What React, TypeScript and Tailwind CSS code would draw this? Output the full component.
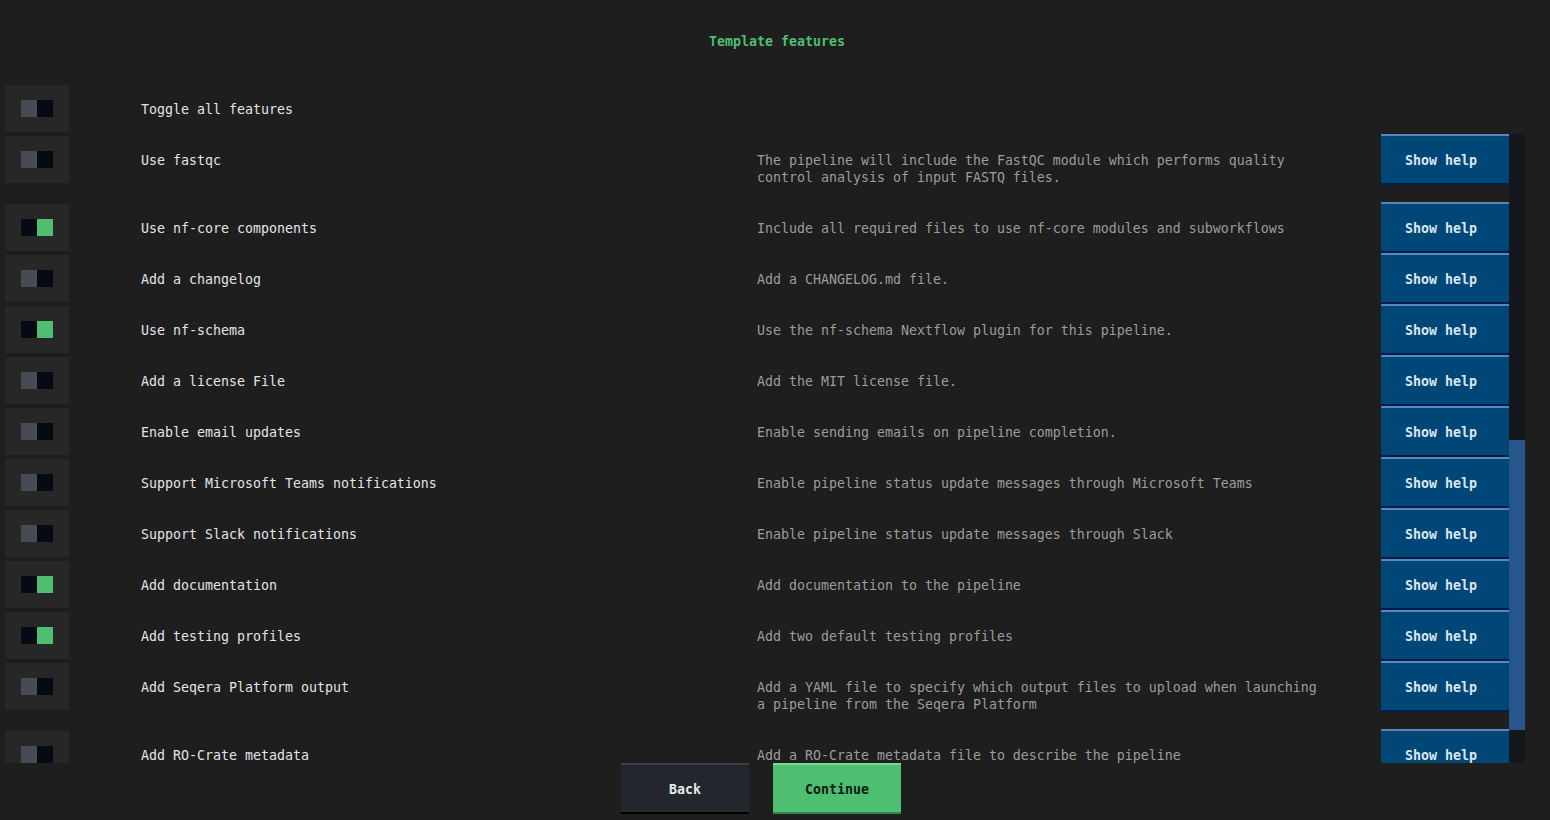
import React from "react";

type Feature = { name: string; desc: string; on: boolean; two?: boolean };

const features: Feature[] = [
  { name: "Use fastqc", desc: "The pipeline will include the FastQC module which performs quality control analysis of input FASTQ files.", on: false, two: true },
  { name: "Use nf-core components", desc: "Include all required files to use nf-core modules and subworkflows", on: true },
  { name: "Add a changelog", desc: "Add a CHANGELOG.md file.", on: false },
  { name: "Use nf-schema", desc: "Use the nf-schema Nextflow plugin for this pipeline.", on: true },
  { name: "Add a license File", desc: "Add the MIT license file.", on: false },
  { name: "Enable email updates", desc: "Enable sending emails on pipeline completion.", on: false },
  { name: "Support Microsoft Teams notifications", desc: "Enable pipeline status update messages through Microsoft Teams", on: false },
  { name: "Support Slack notifications", desc: "Enable pipeline status update messages through Slack", on: false },
  { name: "Add documentation", desc: "Add documentation to the pipeline", on: true },
  { name: "Add testing profiles", desc: "Add two default testing profiles", on: true },
  { name: "Add Seqera Platform output", desc: "Add a YAML file to specify which output files to upload when launching a pipeline from the Seqera Platform", on: false, two: true },
  { name: "Add RO-Crate metadata", desc: "Add a RO-Crate metadata file to describe the pipeline", on: false },
];

function Toggle({ on }: { on: boolean }) {
  return (
    <div className="w-[136px] shrink-0 pt-[2px]">
      <div className="w-[64px] h-[47px] bg-[#272727] flex items-center pl-[16px]">
        {on ? (
          <div className="flex">
            <div className="w-[16px] h-[17px] bg-[#050a14]" />
            <div className="w-[16px] h-[17px] bg-[#4ebf71]" />
          </div>
        ) : (
          <div className="flex">
            <div className="w-[16px] h-[17px] bg-[#474b53]" />
            <div className="w-[16px] h-[17px] bg-[#050a14]" />
          </div>
        )}
      </div>
    </div>
  );
}

function HelpButton() {
  return (
    <div className="w-[128px] h-[51px] shrink-0 bg-[#004677] border-t-2 border-b-2 border-t-[#5a86bb] border-b-[#001c48] flex items-center justify-center pr-[8px] pt-[2px] font-bold text-[#dbe6f0]">
      Show help
    </div>
  );
}

function Row({ f }: { f: Feature }) {
  return (
    <div className={f.two ? "flex h-[68px] shrink-0" : "flex h-[51px] shrink-0"}>
      <Toggle on={f.on} />
      <div className="w-[616px] shrink-0 pt-[18px] text-[#e2e4e8]">{f.name}</div>
      <div className="w-[624px] shrink-0 pt-[18px] text-[#9c9c9c]">
        <div className="w-[572px]">{f.desc}</div>
      </div>
      <HelpButton />
    </div>
  );
}

export default function App() {
  return (
    <div className="w-[1550px] h-[820px] overflow-hidden bg-[#1e1e1e] pl-[5px] flex flex-col font-[family-name:DejaVu_Sans_Mono,monospace] text-[13.29px] leading-[17px]">
      <div className="mt-[33px] h-[17px] w-[1544px] text-center font-bold text-[#4ebf71]">Template features</div>
      <div className="mt-[33px] flex h-[51px] shrink-0">
        <Toggle on={false} />
        <div className="pt-[18px] text-[#e2e4e8]">Toggle all features</div>
      </div>
      <div className="flex h-[629px] shrink-0">
        <div className="w-[1504px] h-[629px] overflow-hidden flex flex-col">
          {features.map((f) => (
            <Row key={f.name} f={f} />
          ))}
        </div>
        <div className="w-[16px] h-[629px] bg-[#14181e] flex flex-col">
          <div className="mt-[306px] h-[290px] bg-[#27578a]" />
        </div>
      </div>
      <div className="flex h-[51px] shrink-0 ml-[616px] gap-[24px]">
        <div className="w-[128px] h-[51px] bg-[#23262d] border-t-2 border-b-2 border-t-[#3f4147] border-b-[#000000] flex items-center justify-center pt-[2px] font-bold text-[#e6e8ec]">
          Back
        </div>
        <div className="w-[128px] h-[51px] bg-[#4ebf71] border-t-2 border-b-2 border-t-[#74da93] border-b-[#2a8a4c] flex items-center justify-center pt-[2px] font-bold text-[#0b1a10]">
          Continue
        </div>
      </div>
    </div>
  );
}
